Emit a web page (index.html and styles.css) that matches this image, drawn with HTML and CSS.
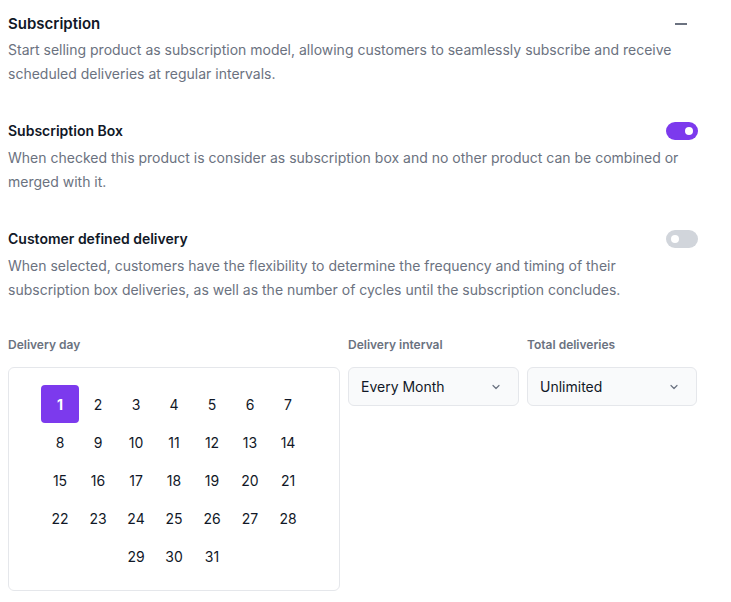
FILE: index.html
```html
<!DOCTYPE html>
<html>
<head>
<meta charset="utf-8">
<link rel="stylesheet" href="styles.css">
</head>
<body>
<div class="panel">
  <section class="sec sec-main">
    <div class="row">
      <h2 class="title title-lg">Subscription</h2>
      <svg class="minus" width="16" height="16" viewBox="0 0 16 16"><path d="M2 8h12" stroke="#6b7280" stroke-width="2" stroke-linecap="butt"/></svg>
    </div>
    <p class="desc desc-main">Start selling product as subscription model, allowing customers to seamlessly subscribe and receive scheduled deliveries at regular intervals.</p>
  </section>

  <section class="sec">
    <div class="row">
      <h3 class="title">Subscription Box</h3>
      <span class="toggle on"><span class="knob"></span></span>
    </div>
    <p class="desc">When checked this product is consider as subscription box and no other product can be combined or merged with it.</p>
  </section>

  <section class="sec">
    <div class="row">
      <h3 class="title">Customer defined delivery</h3>
      <span class="toggle"><span class="knob"></span></span>
    </div>
    <p class="desc">When selected, customers have the flexibility to determine the frequency and timing of their subscription box deliveries, as well as the number of cycles until the subscription concludes.</p>
  </section>

  <div class="fields">
    <div class="field">
      <label class="label">Delivery day</label>
      <div class="calendar">
        <div class="days">
          <span class="day sel">1</span><span class="day">2</span><span class="day">3</span><span class="day">4</span><span class="day">5</span><span class="day">6</span><span class="day">7</span>
          <span class="day">8</span><span class="day">9</span><span class="day">10</span><span class="day">11</span><span class="day">12</span><span class="day">13</span><span class="day">14</span>
          <span class="day">15</span><span class="day">16</span><span class="day">17</span><span class="day">18</span><span class="day">19</span><span class="day">20</span><span class="day">21</span>
          <span class="day">22</span><span class="day">23</span><span class="day">24</span><span class="day">25</span><span class="day">26</span><span class="day">27</span><span class="day">28</span>
          <span class="day">29</span><span class="day">30</span><span class="day">31</span>
        </div>
      </div>
    </div>
    <div class="field">
      <label class="label">Delivery interval</label>
      <div class="select"><span>Every Month</span>
        <svg width="12" height="12" viewBox="0 0 12 12"><path d="M3 4.5l3 3 3-3" fill="none" stroke="#6b7280" stroke-width="1.2" stroke-linecap="round" stroke-linejoin="round"/></svg>
      </div>
    </div>
    <div class="field">
      <label class="label">Total deliveries</label>
      <div class="select"><span>Unlimited</span>
        <svg width="12" height="12" viewBox="0 0 12 12"><path d="M3 4.5l3 3 3-3" fill="none" stroke="#6b7280" stroke-width="1.2" stroke-linecap="round" stroke-linejoin="round"/></svg>
      </div>
    </div>
  </div>
</div>
</body>
</html>
```
FILE: styles.css
```css
* { box-sizing: border-box; }
body {
  margin: 8px;
  background: #fff;
  font-family: Inter, "Noto Sans", sans-serif;
  color: #111827;
}
.panel {
  width: 690px;
  padding-top: 6px;
}
.sec { margin-bottom: 35px; }
.row {
  display: flex;
  align-items: center;
  justify-content: space-between;
}
.title {
  margin: 0;
  font-size: 14px;
  font-weight: 600;
  line-height: 20px;
  color: #111827;
}
.title-lg { font-size: 15px; }
.minus { margin-right: 9px; }
.desc {
  margin: 5px 0 0;
  font-size: 14px;
  line-height: 24px;
  color: #6b7280;
}
.desc-main { margin-top: 4px; }
.toggle {
  width: 32px;
  height: 18px;
  border-radius: 9px;
  background: #d1d5db;
  display: flex;
  align-items: center;
  padding: 0 5px;
}
.toggle.on {
  background: #7c3aed;
  justify-content: flex-end;
}
.knob {
  width: 8px;
  height: 8px;
  border-radius: 50%;
  background: #fff;
}
.fields {
  display: grid;
  grid-template-columns: 332px 171px 170px;
  column-gap: 8px;
  margin-top: -2px;
}
.label {
  display: block;
  font-size: 12px;
  font-weight: 600;
  line-height: 20px;
  color: #6b7280;
  margin-bottom: 12px;
}
.calendar {
  border: 1px solid #e5e7eb;
  border-radius: 6px;
  padding: 17px 0 15px;
}
.days {
  width: 266px;
  margin: 0 auto;
  display: flex;
  flex-wrap: wrap;
  justify-content: center;
}
.day {
  width: 38px;
  height: 38px;
  display: flex;
  align-items: center;
  justify-content: center;
  font-size: 14px;
  color: #111827;
  border-radius: 4px;
}
.day.sel {
  background: #7c3aed;
  color: #fff;
  font-weight: 700;
}
.select {
  height: 39px;
  border: 1px solid #e5e7eb;
  border-radius: 6px;
  background: #f9fafb;
  display: flex;
  align-items: center;
  justify-content: space-between;
  padding: 0 16px 0 12px;
  font-size: 14px;
  color: #111827;
}
```
